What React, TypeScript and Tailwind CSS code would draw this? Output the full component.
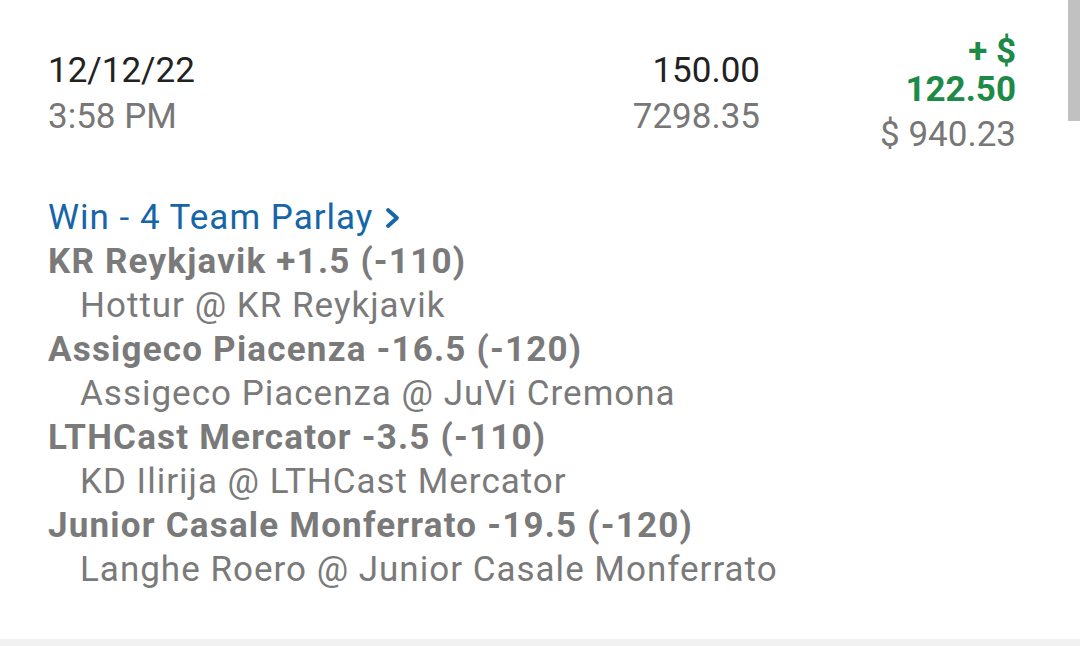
import React from 'react';

const legs = [
  { pick: 'KR Reykjavik +1.5 (-110)', game: 'Hottur @ KR Reykjavik' },
  { pick: 'Assigeco Piacenza -16.5 (-120)', game: 'Assigeco Piacenza @ JuVi Cremona' },
  { pick: 'LTHCast Mercator -3.5 (-110)', game: 'KD Ilirija @ LTHCast Mercator' },
  { pick: 'Junior Casale Monferrato -19.5 (-120)', game: 'Langhe Roero @ Junior Casale Monferrato' },
];

const App: React.FC = () => {
  return (
    <div
      className="relative flex flex-col h-[646px] w-[1080px] overflow-hidden bg-white"
      style={{ fontFamily: 'Roboto, "Noto Sans", sans-serif' }}
    >
      {/* scrollbar thumb */}
      <div className="absolute right-0 top-0 w-[12px] h-[121px] bg-[#c1c1c1]" />

      <div className="flex-1 pl-[48px] pr-[64px] pt-[48px]">
        {/* header row */}
        <div className="flex items-start">
          <div className="flex flex-col">
            <span className="text-[35px] leading-[46px] text-[#222]">12/12/22</span>
            <span className="text-[35px] leading-[46px] text-[#777]">3:58 PM</span>
          </div>
          <div className="flex-1" />
          <div className="flex flex-col items-end">
            <span className="text-[35px] leading-[46px] text-[#222]">150.00</span>
            <span className="text-[35px] leading-[46px] text-[#777]">7298.35</span>
          </div>
          <div className="flex flex-col items-end w-[256px] -mt-[15px]">
            <span className="text-[35px] leading-[38px] font-bold text-[#1e8a48]">+ $</span>
            <span className="text-[35px] leading-[38px] font-bold text-[#1e8a48]">122.50</span>
            <span className="text-[35px] leading-[52px] text-[#777]">$ 940.23</span>
          </div>
        </div>

        {/* parlay */}
        <div className="flex flex-col mt-[35px] tracking-[1px]">
          <div className="flex items-center gap-[12px] text-[35px] leading-[44px] text-[#1566a8]">
            <span>Win - 4 Team Parlay</span>
            <svg width="16" height="22" viewBox="0 0 16 22" fill="none">
              <path d="M3 3l9 8-9 8" stroke="#1566a8" strokeWidth="3.8" strokeLinecap="round" strokeLinejoin="round" />
            </svg>
          </div>
          {legs.map((leg) => (
            <div key={leg.pick} className="flex flex-col">
              <span className="text-[35px] leading-[44px] font-bold tracking-[1.2px] text-[#7a7a7a]">{leg.pick}</span>
              <span className="pl-[32px] text-[35px] leading-[44px] text-[#7a7a7a]">{leg.game}</span>
            </div>
          ))}
        </div>
      </div>

      <div className="h-[7px] bg-[#f1f1f1] shrink-0" />
    </div>
  );
};

export default App;
